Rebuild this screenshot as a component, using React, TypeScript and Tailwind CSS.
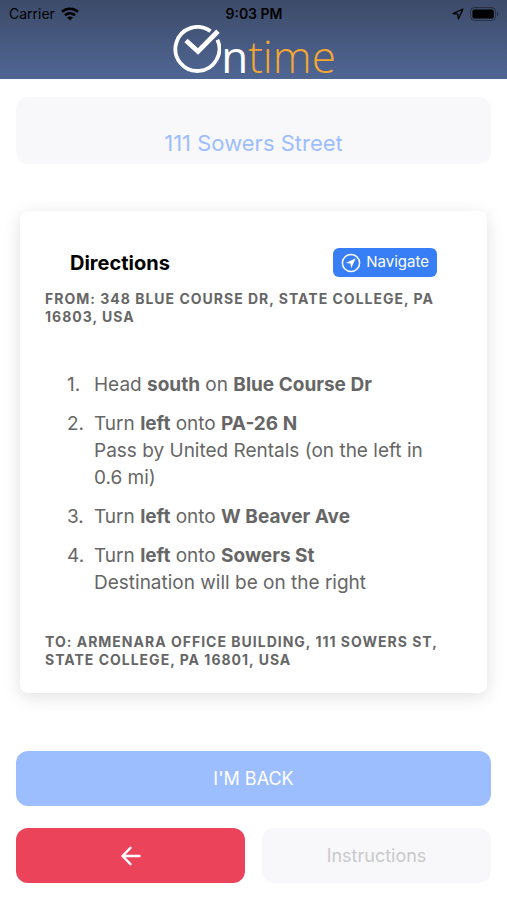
import React from 'react';

interface Step {
  id: number;
  text: React.ReactNode;
  note?: string;
}

const steps: Step[] = [
  { id: 1, text: <>Head <b className="font-bold">south</b> on <b className="font-bold">Blue Course Dr</b></> },
  {
    id: 2,
    text: <>Turn <b className="font-bold">left</b> onto <b className="font-bold">PA-26 N</b></>,
    note: 'Pass by United Rentals (on the left in 0.6 mi)',
  },
  { id: 3, text: <>Turn <b className="font-bold">left</b> onto <b className="font-bold">W Beaver Ave</b></> },
  {
    id: 4,
    text: <>Turn <b className="font-bold">left</b> onto <b className="font-bold">Sowers St</b></>,
    note: 'Destination will be on the right',
  },
];

const StatusBar: React.FC = () => (
  <div className="grid grid-cols-3 items-center h-7 pl-[9px] pr-2 text-sm text-black">
    <div className="flex items-center gap-[6px]">
      <span>Carrier</span>
      <svg className="w-[18px] h-[14px]" viewBox="0 0 18 14" fill="none" stroke="currentColor" strokeWidth="2.6">
        <path d="M1 4.8C5.6 .7 12.4 .7 17 4.8" />
        <path d="M4 8.3c2.9-2.6 7.1-2.6 10 0" />
        <path d="M9 13.4 6.1 10.6c1.6-1.5 4.2-1.5 5.8 0z" fill="currentColor" stroke="none" />
      </svg>
    </div>
    <span className="text-center font-semibold">9:03 PM</span>
    <div className="flex items-center justify-end gap-[6px]">
      <svg className="w-3 h-3" viewBox="0 0 12 12" fill="none" stroke="currentColor" strokeWidth="1.3" strokeLinejoin="round">
        <path d="M11 1 1 5.6l4.8.6.6 4.8z" />
      </svg>
      <svg className="w-[29px] h-[14px]" viewBox="0 0 29 14">
        <rect x=".6" y=".6" width="25" height="12.8" rx="3.8" fill="none" stroke="#000" strokeOpacity=".4" />
        <rect x="2.4" y="2.4" width="21.4" height="9.2" rx="2.2" />
        <path d="M27 4.8c1.8.8 1.8 3.6 0 4.4z" fillOpacity=".4" />
      </svg>
    </div>
  </div>
);

const Logo: React.FC = () => (
  <div className="-mt-[3px] flex justify-center items-start pl-[2px] font-['Open_Sans'] text-[44px] leading-[46px]">
    <svg className="w-12 h-12" viewBox="0 0 48 48" fill="none" stroke="#fff" strokeWidth="3.8">
      <path d="M37.5 6.3A22 22 0 1 0 44.4 14.8" />
      <path d="M13 15.5 25 26.5 45 6.2" strokeWidth="4.8" />
    </svg>
    <span className="mt-2 text-white">n</span>
    <span className="mt-2 font-light text-[#f3a633]">time</span>
  </div>
);

export default function App() {
  return (
    <div className="min-h-screen bg-white font-[Inter,sans-serif]">
      <header className="h-[79px] bg-linear-to-b from-[#3d4b69] to-[#4f6694]">
        <StatusBar />
        <Logo />
      </header>

      <main className="px-4 pt-[18px]">
        <h1 className="h-[67px] rounded-xl bg-[#f8f8fa] pt-[30px] text-center text-[22px] leading-8 text-[#9dbefe]">
          111 Sowers Street
        </h1>

        <section className="mx-1 mt-[47px] rounded-lg bg-white px-[25px] pt-[37px] pb-6 text-[#666] shadow-[0_4px_18px_rgba(0,0,0,0.12)]">
          <div className="flex items-center justify-between px-[25px]">
            <h2 className="text-xl font-bold text-black">Directions</h2>
            <button className="flex items-center gap-[5px] h-[29px] rounded-md bg-[#387ef7] px-2 text-[15px] text-white">
              <svg className="w-5 h-5" viewBox="0 0 20 20" fill="none" stroke="currentColor" strokeWidth="1.5">
                <circle cx="10" cy="10" r="8.6" />
                <path d="M14.8 5.2 4.8 9.9l4.7.6.6 4.7z" fill="currentColor" stroke="none" />
              </svg>
              Navigate
            </button>
          </div>

          <p className="mt-[13px] text-sm leading-[18px] font-bold tracking-[1px] uppercase">
            From: 348 Blue Course Dr, State College, PA 16803, USA
          </p>

          <ol className="mt-[45px] flex flex-col gap-3 px-[22px] text-[19px] leading-[27px]">
            {steps.map((step) => (
              <li key={step.id} className="flex">
                <span className="w-[27px] shrink-0">{step.id}.</span>
                <div>
                  <p>{step.text}</p>
                  {step.note && <p>{step.note}</p>}
                </div>
              </li>
            ))}
          </ol>

          <p className="mt-[37px] text-sm leading-[18px] font-bold tracking-[1px] uppercase">
            To: Armenara Office Building, 111 Sowers St, State College, PA 16801, USA
          </p>
        </section>

        <div className="mt-[58px] grid grid-cols-2 gap-x-[17px] gap-y-[22px] pb-4 text-lg">
          <button className="col-span-2 h-[55px] rounded-xl bg-[#9dbefe] text-white">I'M BACK</button>
          <button aria-label="Back" className="flex items-center justify-center h-[55px] rounded-xl bg-[#eb445a] text-white">
            <svg className="w-5 h-5" viewBox="0 0 20 20" fill="none" stroke="currentColor" strokeWidth="2.4" strokeLinecap="round" strokeLinejoin="round">
              <path d="M9.5 1.8 1.5 10l8 8.2M1.5 10h17" />
            </svg>
          </button>
          <button className="h-[55px] rounded-xl bg-[#f8f8fa] text-[#c8c9cb]">Instructions</button>
        </div>
      </main>
    </div>
  );
}
